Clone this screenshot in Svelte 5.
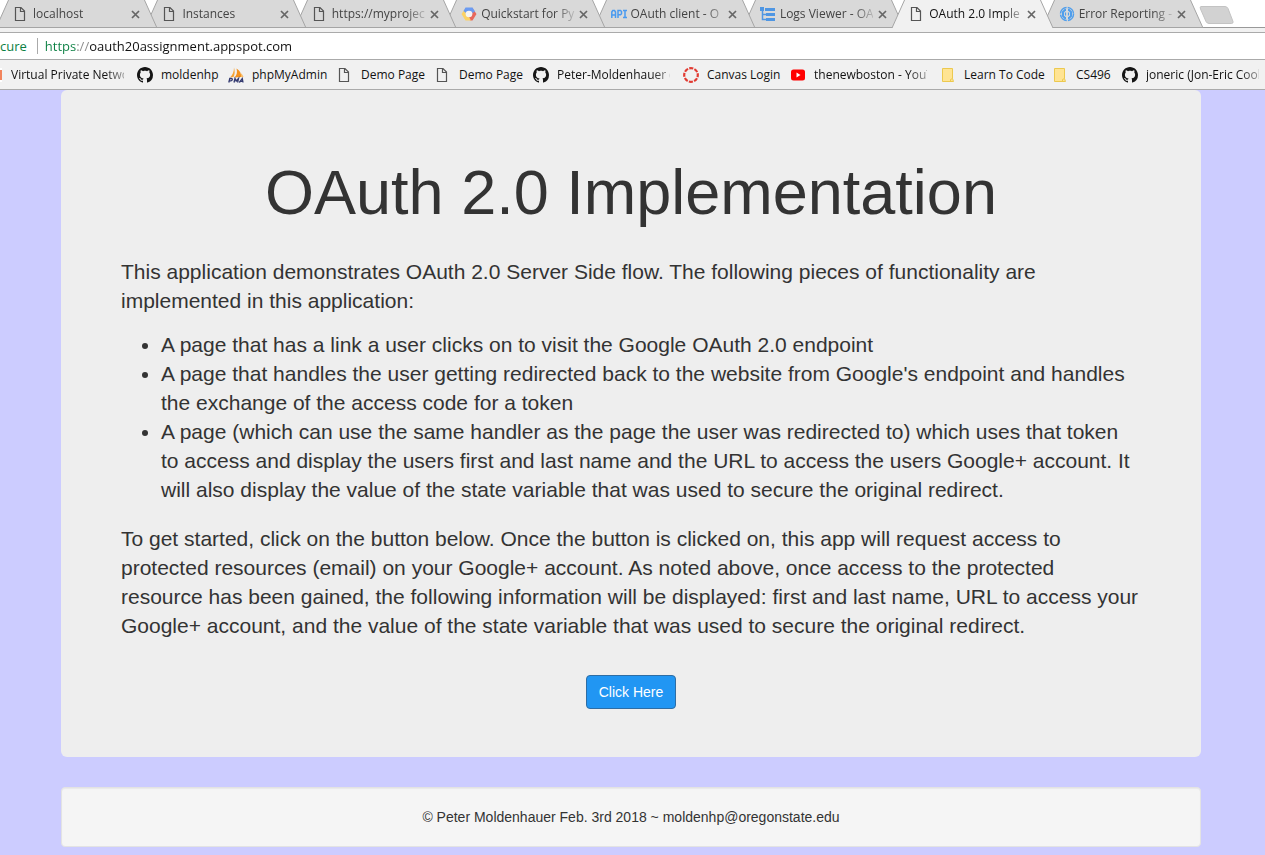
<script>
  const tabs = [
    { title: 'localhost', icon: 'page' },
    { title: 'Instances', icon: 'page' },
    { title: 'https://myprojec', icon: 'page' },
    { title: 'Quickstart for Py', icon: 'cloud' },
    { title: 'OAuth client - O', icon: 'api' },
    { title: 'Logs Viewer - OA', icon: 'logs' },
    { title: 'OAuth 2.0 Imple', icon: 'page', active: true },
    { title: 'Error Reporting -', icon: 'errors' }
  ];

  const bookmarks = [
    { title: 'Virtual Private Netwo', icon: 'vpn', width: 113 },
    { title: 'moldenhp', icon: 'github', width: 54 },
    { title: 'phpMyAdmin', icon: 'pma', width: 72 },
    { title: 'Demo Page', icon: 'page', width: 61 },
    { title: 'Demo Page', icon: 'page', width: 61 },
    { title: 'Peter-Moldenhauer (', icon: 'github', width: 113 },
    { title: 'Canvas Login', icon: 'canvas', width: 70 },
    { title: 'thenewboston - YouT', icon: 'youtube', width: 113 },
    { title: 'Learn To Code', icon: 'folder', width: 75 },
    { title: 'CS496', icon: 'folder', width: 33 },
    { title: 'joneric (Jon-Eric Cook', icon: 'github', width: 113 }
  ];

  let address = $state('https://oauth20assignment.appspot.com');
</script>

{#snippet glyph(name)}
  <svg class="glyph" viewBox="0 0 16 16" width="16" height="16" aria-hidden="true">
    {#if name === 'page'}
      <path d="M2.500 1.500h5.500l3.500 3.500v9.500h-9zM7.500 1.500v4h4" fill="none" stroke="currentColor" stroke-width="1.200" />
    {:else if name === 'cloud'}
      <path d="M11 1.500L15.500 8 11.500 14.500H9L7.500 11l4-3L10 4.500z" fill="#e8685c" />
      <path d="M3.500 3.500L.500 8l4 6.500h5.500L8 11 4.500 8l1-2.500z" fill="#fbd266" />
      <path d="M4.500 1.500h7L14 5.500l-2.500 1.500-1-1.500h-4L5 7 2.500 5z" fill="#6b9bf2" />
      <circle cx="8" cy="8" r="3.300" fill="#f4f4f4" />
    {:else if name === 'api'}
      <path d="M.8 12V6l1-1.500h1.700l1 1.500v6M.8 9h3.700M7 12V4.500h2.500l1 1v2.300l-1 1H7M12 4.500h4M14 4.500v7M12 11.500h4" fill="none" stroke="#4a9af0" stroke-width="1.500" />
    {:else if name === 'logs'}
      <path d="M0 1h4v4H0zM5 2h10v3H5zM6 7h9v3H6zM6 12h9v3H6z" fill="#4f96e3" />
      <path d="M2.500 4v9.500H6M2.500 8.500H6" fill="none" stroke="#4f96e3" stroke-width="1.500" />
    {:else if name === 'errors'}
      <circle cx="8" cy="8" r="6.500" fill="none" stroke="#4f9eec" stroke-width="1.500" stroke-dasharray="9 1.200" />
      <path d="M7 4H6L4 6v4l2 2h1M9 4h1l2 2v4l-2 2H9" fill="none" stroke="#4f9eec" stroke-width="2" />
      <path d="M6.500 6.500v3M9.500 6.500v3" fill="none" stroke="#4f9eec" stroke-width="1.200" />
    {:else if name === 'vpn'}
      <rect x="1" y="1" width="14" height="14" fill="#fff" />
      <rect x="4" y="3" width="11" height="10" fill="#f2845c" />
    {:else if name === 'github'}
      <path fill="#151515" d="M8 0C3.580 0 0 3.580 0 8c0 3.540 2.290 6.530 5.470 7.590.4.070.55-.17.55-.38 0-.19-.01-.82-.01-1.490-2.010.37-2.530-.49-2.690-.94-.09-.23-.48-.94-.82-1.130-.28-.15-.68-.52-.01-.53.63-.01 1.080.58 1.230.82.72 1.210 1.870.87 2.330.66.070-.52.28-.87.51-1.070-1.780-.2-3.640-.89-3.640-3.950 0-.87.31-1.590.82-2.150-.08-.2-.36-1.020.08-2.120 0 0 .67-.21 2.200.82.64-.18 1.320-.27 2-.27s1.360.09 2 .27c1.530-1.040 2.200-.82 2.200-.82.44 1.100.16 1.920.08 2.120.51.56.82 1.270.82 2.150 0 3.070-1.870 3.750-3.650 3.950.29.25.54.73.54 1.480 0 1.070-.01 1.930-.01 2.200 0 .21.15.46.55.38A8.010 8.010 0 0 0 16 8c0-4.420-3.580-8-8-8z" />
    {:else if name === 'pma'}
      <path d="M6 .500C7 4 7 7.500 5.500 10L2 10.500C4.500 8 6 5 6 .5z" fill="#f6a437" />
      <path d="M8.500 1.500c3.500 2 5 5 4.500 8.500L6.500 10.500C9 8 9.500 5 8.500 1.500z" fill="#f39220" />
      <path d="M12.500 6c1.500 1 2.500 2.500 3 4l-2.500.3c.2-1.500 0-3-.5-4.300z" fill="#f8bc68" />
      <path d="M.8 15.500l1-4h1.500q1.300 0 1 1.200t-1.700 1.100H1.300M6 15.500l1-4 1.200 2.500 2.300-2.500-.9 4M11.300 15.500l3-4 .7 4M12.500 14.300h2.300" fill="none" stroke="#343a70" stroke-width="1.300" />
    {:else if name === 'canvas'}
      <circle cx="8" cy="8" r="6.800" fill="none" stroke="#e13a31" stroke-width="2.200" stroke-dasharray="4.100 1.240" stroke-dashoffset="2" />
    {:else if name === 'youtube'}
      <rect x="1" y="2.500" width="14" height="11" rx="2.500" fill="#f00" />
      <path d="M6.500 5.500v5l4-2.500z" fill="#fff" />
    {:else if name === 'folder'}
      <path d="M2.500 1.500h10v10l1 3H2.500z" fill="#ffe493" stroke="#ecc94f" />
      <path d="M10.500 14.500v-2l2-1" fill="none" stroke="#ecc94f" />
    {/if}
  </svg>
{/snippet}

<header class="browser">
  <nav class="strip" aria-label="Open tabs">
    <div class="tabs">
      {#each tabs as tab, i}
        <div class="tab" class:active={tab.active} style:z-index={tab.active ? 20 : 10 - i}>
          <svg class="shape" viewBox="0 0 162 28" width="162" height="28" aria-hidden="true">
            <path d="M0 28L13 -1H148L161 28z" />
            <path class="edge" d="M0 28L13 -1M148 -1L161 28" />
            {#if !tab.active}
              <path class="base" d="M0 27.500H161" />
            {/if}
          </svg>
          {@render glyph(tab.icon)}
          <a class="title" href="#app">{tab.title}</a>
          <button class="close" type="button" aria-label="Close {tab.title}">
            <svg viewBox="0 0 9 9" width="9" height="9" aria-hidden="true">
              <path d="M1 1l7 7M8 1l-7 7" stroke="currentColor" stroke-width="1.700" />
            </svg>
          </button>
        </div>
      {/each}
    </div>
    <button class="new-tab" type="button" aria-label="New tab">
      <svg viewBox="0 0 36 19" width="36" height="19" aria-hidden="true">
        <path d="M2 .5H26q2 0 3 2l5 13q.5 2-1.500 2H10q-2 0-3-2L1.500 3Q.5.5 2 .5z" fill="#d2d2d2" stroke="#c3c3c3" />
      </svg>
    </button>
  </nav>

  <div class="address">
    <span class="secure">cure</span>
    <input type="text" aria-label="Address" bind:value={address} spellcheck="false" />
  </div>

  <nav class="bookmarks" aria-label="Bookmarks">
    {#each bookmarks as mark}
      <a href="#app">
        {@render glyph(mark.icon)}
        <span class:long={mark.width > 100} style:width="{mark.width}px">{mark.title}</span>
      </a>
    {/each}
  </nav>
</header>

<div class="container">
  <main class="jumbotron">
    <h1>OAuth 2.0 Implementation</h1>
    <p>
      This application demonstrates OAuth 2.0 Server Side flow. The following pieces of functionality are
      implemented in this application:
    </p>
    <ul>
      <li>A page that has a link a user clicks on to visit the Google OAuth 2.0 endpoint</li>
      <li>
        A page that handles the user getting redirected back to the website from Google's endpoint and handles
        the exchange of the access code for a token
      </li>
      <li>
        A page (which can use the same handler as the page the user was redirected to) which uses that token
        to access and display the users first and last name and the URL to access the users Google+ account. It
        will also display the value of the state variable that was used to secure the original redirect.
      </li>
    </ul>
    <p>
      To get started, click on the button below. Once the button is clicked on, this app will request access to
      protected resources (email) on your Google+ account. As noted above, once access to the protected
      resource has been gained, the following information will be displayed: first and last name, URL to access your
      Google+ account, and the value of the state variable that was used to secure the original redirect.
    </p>
    <button class="start" type="button">Click Here</button>
  </main>

  <footer>© Peter Moldenhauer Feb. 3rd 2018 ~ moldenhp@oregonstate.edu</footer>
</div>

<style>
  :global(body) {
    background: #ccccff;
    color: #333;
    font: 14px/20px "Liberation Sans", Arial, sans-serif;
    overflow-x: hidden;
  }

  .browser {
    background: #f1f1f1;
    border-bottom: 1px solid #aaa;
    font: 12px/16px "Open Sans", "Segoe UI", sans-serif;
    overflow: hidden;
  }

  .browser a {
    color: #111;
    text-decoration: none;
    white-space: nowrap;
  }

  .glyph {
    flex: none;
    display: block;
    color: #555;
  }

  .strip {
    display: flex;
    height: 27px;
    background: #fff;
    border-bottom: 1px solid #999;
  }

  .tabs {
    display: flex;
    flex: 0 1 1195px;
    min-width: 0;
    margin-left: -4px;
  }

  .tab {
    position: relative;
    display: flex;
    align-items: center;
    flex: 1 1 0;
    min-width: 0;
    height: 28px;
    padding: 0 2px 0 17px;
    box-sizing: border-box;
  }

  .tab .glyph,
  .tab .title,
  .tab .close {
    position: relative;
  }

  .shape {
    position: absolute;
    left: 0;
    top: 0;
    fill: #d9d9d9;
  }

  .shape .edge,
  .shape .base {
    fill: none;
    stroke: #a5a5a5;
    stroke-width: 1;
  }

  .active .shape {
    fill: #f1f1f1;
  }

  .title {
    flex: 1;
    min-width: 0;
    margin: 0 1px 0 4px;
    mask-image: linear-gradient(to right, #000 74px, transparent 98px);
  }

  .tab:not(.active) .title {
    color: #444;
  }

  .close {
    display: grid;
    place-items: center;
    flex: none;
    width: 16px;
    height: 16px;
    padding: 0;
    border: 0;
    background: none;
    color: #666;
  }

  .new-tab {
    flex: none;
    padding: 0;
    margin: 6px 0 0 8px;
    height: 19px;
    border: 0;
    background: none;
  }

  .new-tab svg {
    display: block;
  }

  .address {
    display: flex;
    align-items: center;
    height: 26px;
    margin-top: 4px;
    background: #fff;
    border: solid #aaa;
    border-width: 1px 0;
    font-size: 13px;
  }

  .secure {
    color: #0b8043;
    padding-right: 10px;
    border-right: 1px solid #aaa;
  }

  .address input {
    flex: 1;
    padding: 0 0 0 7px;
    border: 0;
    outline: 0;
    font: inherit;
    color: transparent;
    background: linear-gradient(to right, #0b8043 39px, #888 39px, #888 52px, #111 52px) text;
  }

  .bookmarks {
    display: flex;
    gap: 13px;
    height: 29px;
    margin-left: -13px;
  }

  .bookmarks a {
    display: flex;
    align-items: center;
    gap: 8px;
    flex: none;
  }

  .long {
    mask-image: linear-gradient(to right, #000 94px, transparent 124px);
  }

  .container {
    max-width: 1140px;
    margin: 0 auto;
    padding: 0 18px 8px 15px;
  }

  .jumbotron {
    padding: 68px 60px 48px;
    margin-bottom: 30px;
    border-radius: 6px;
    background: #eee;
    font-size: 21px;
    line-height: 29px;
    text-align: center;
  }

  h1 {
    margin: 0 0 30px;
    font-size: 63px;
    line-height: 69px;
    font-weight: 500;
  }

  p,
  ul {
    text-align: left;
    margin: 0 0 15px;
  }

  ul {
    padding-left: 40px;
    margin-bottom: 20px;
  }

  .start {
    display: block;
    margin: 35px auto 0;
    padding: 6px 12px;
    border: 1px solid #2e6da4;
    border-radius: 4px;
    background: #2196f3;
    color: #fff;
    font: 14px/20px "Liberation Sans", Arial, sans-serif;
  }

  footer {
    padding: 19px;
    border: 1px solid #e3e3e3;
    border-radius: 4px;
    background: #f5f5f5;
    box-shadow: inset 0 1px 1px rgba(0, 0, 0, 0.05);
    text-align: center;
  }
</style>
